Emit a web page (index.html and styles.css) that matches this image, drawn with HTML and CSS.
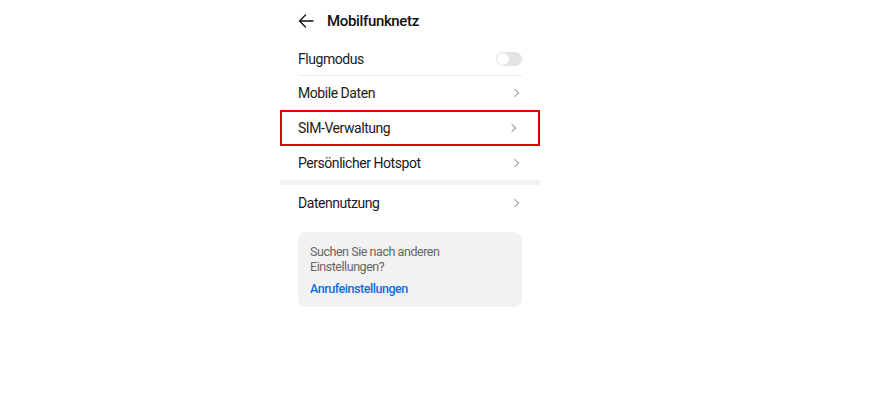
FILE: index.html
```html
<!DOCTYPE html>
<html lang="de">
<head>
  <meta charset="UTF-8">
  <meta name="viewport" content="width=device-width, initial-scale=1.0">
  <title>Mobilfunknetz</title>
  <link rel="stylesheet" href="styles.css">
</head>
<body>

  <div class="screen">
    <!-- Kopfzeile -->
    <div class="header">
      <svg class="back" width="16" height="16" viewBox="0 0 16 16">
        <path d="M15 8H1.5M7.5 2L1.5 8l6 6" fill="none" stroke="#111" stroke-width="1.3" stroke-linecap="round" stroke-linejoin="round"/>
      </svg>
      <span class="title">Mobilfunknetz</span>
    </div>

    <!-- Liste -->
    <div class="row divider">
      <span>Flugmodus</span>
      <span class="toggle"><span class="knob"></span></span>
    </div>
    <div class="row">
      <span>Mobile Daten</span>
      <span class="chevron"></span>
    </div>
    <div class="row highlight">
      <span>SIM-Verwaltung</span>
      <span class="chevron"></span>
    </div>
    <div class="row">
      <span>Persönlicher Hotspot</span>
      <span class="chevron"></span>
    </div>

    <div class="band"></div>

    <div class="row tall">
      <span>Datennutzung</span>
      <span class="chevron"></span>
    </div>

    <!-- Hinweis -->
    <div class="card">
      <p class="hint">Suchen Sie nach anderen Einstellungen?</p>
      <a class="link" href="#">Anrufeinstellungen</a>
    </div>
  </div>

</body>
</html>
```

FILE: styles.css
```css
body {
  font-family: 'Roboto', 'Noto Sans', sans-serif;
  margin: 0;
  padding: 0;
  background-color: #fff;
  color: #1a1a1a;
}
.screen {
  width: 260px;
  margin-left: 280px;
}
.header {
  height: 42px;
  display: flex;
  align-items: center;
  padding-left: 18px;
}
.back {
  margin-right: 13px;
}
.title {
  font-size: 15px;
  font-weight: 500;
  letter-spacing: -0.35px;
  color: #111;
}
.row {
  height: 34px;
  margin: 0 18px;
  display: flex;
  align-items: center;
  justify-content: space-between;
  font-size: 14px;
  letter-spacing: -0.45px;
  box-sizing: border-box;
}
.divider {
  border-bottom: 1px solid #ececec;
}
.highlight {
  height: 36px;
  margin: 0;
  padding: 0 19px 0 16px;
  border: 2px solid #e00000;
}
.tall {
  height: 36px;
}
.chevron {
  width: 5px;
  height: 5px;
  border-top: 1.3px solid #a0a0a0;
  border-right: 1.3px solid #a0a0a0;
  transform: rotate(45deg);
  margin-right: 4px;
}
.toggle {
  position: relative;
  width: 26px;
  height: 14px;
  border-radius: 7px;
  background-color: #e3e3e3;
}
.knob {
  position: absolute;
  left: 1px;
  top: 1px;
  width: 12px;
  height: 12px;
  border-radius: 50%;
  background-color: #fff;
}
.band {
  height: 5px;
  background-color: #f2f2f2;
}
.card {
  margin: 11px 18px 0;
  padding: 12px 12px 10px;
  background-color: #f2f2f2;
  border-radius: 8px;
  font-size: 12.5px;
  letter-spacing: -0.45px;
}
.hint {
  margin: 0 0 7px;
  line-height: 15px;
  color: #666;
}
.link {
  line-height: 16px;
  font-weight: 500;
  color: #0a6fe0;
  text-decoration: none;
}
```
